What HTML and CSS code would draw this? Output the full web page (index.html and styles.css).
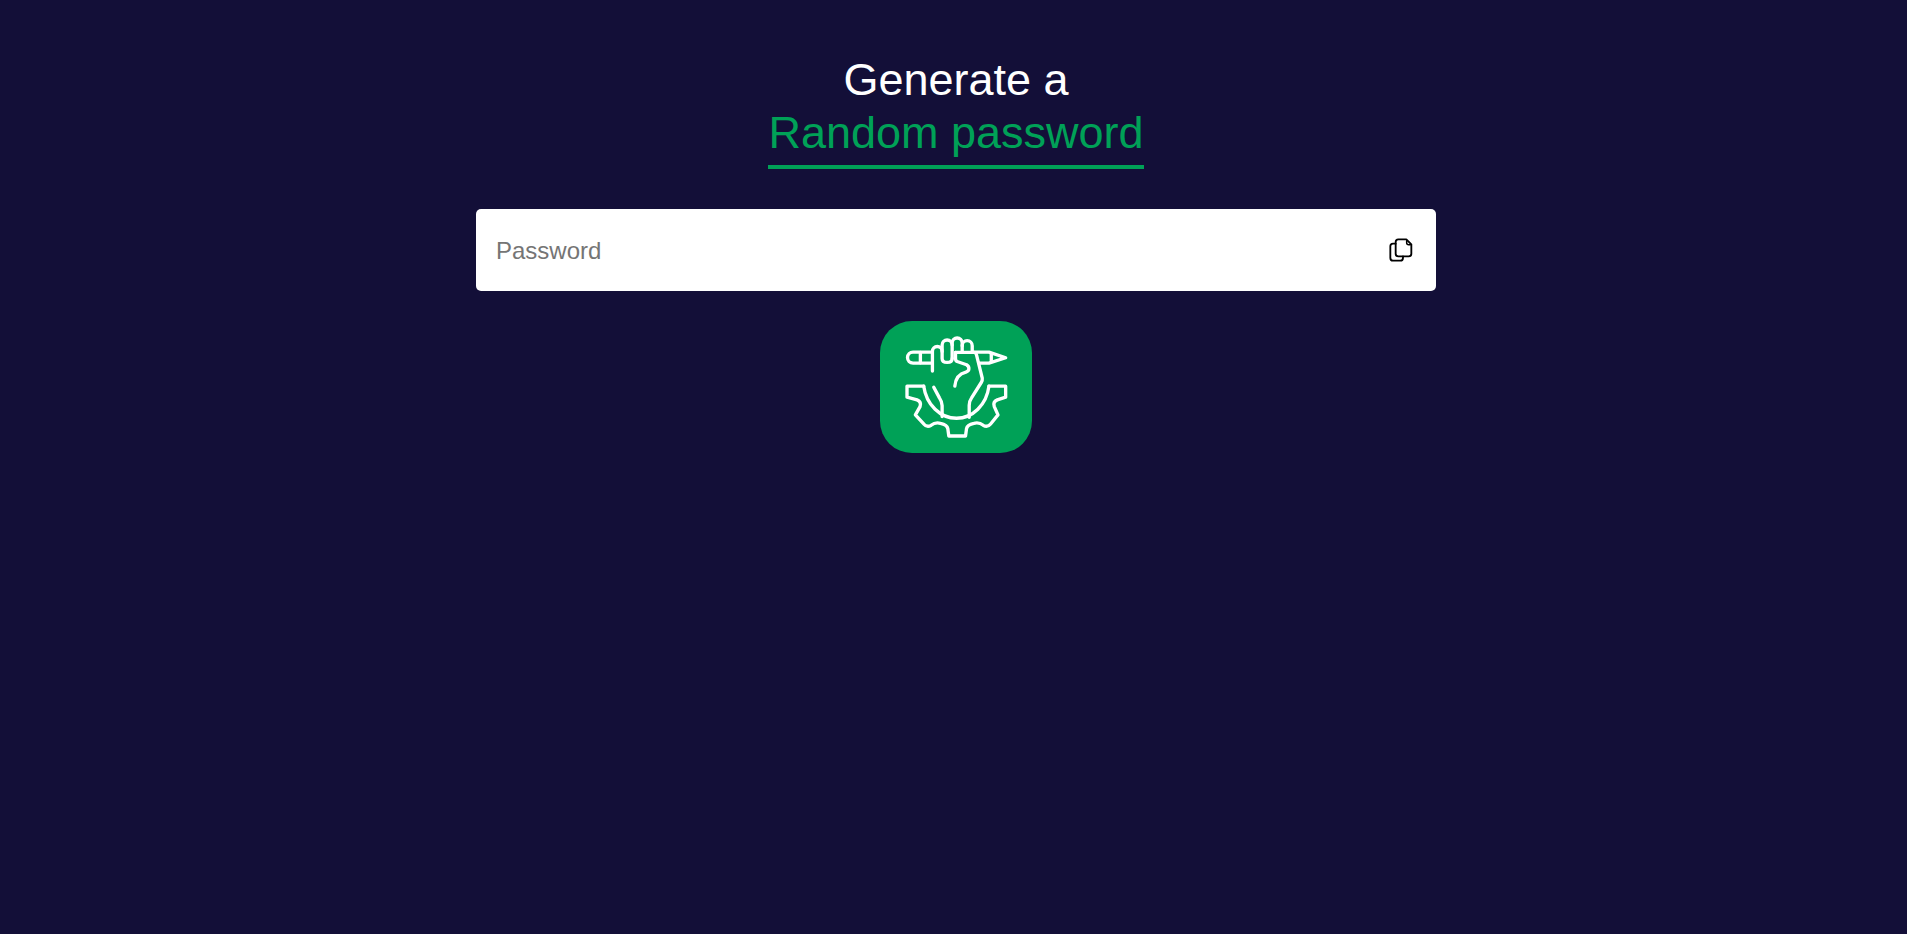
FILE: index.html
```html
<!DOCTYPE html>
<html lang="en">
<head>
<meta charset="utf-8">
<title>Random password generator</title>
<link rel="stylesheet" href="styles.css">
</head>
<body>
<main class="page">
  <h1 class="title">Generate a<br><span class="accent">Random password</span></h1>
  <div class="field">
    <input class="field-input" type="text" placeholder="Password" aria-label="Password">
    <button class="copy" type="button" aria-label="Copy">
      <svg class="copy-icon" viewBox="88 113 72 72" fill="none" stroke="#000" stroke-width="5.500" stroke-linecap="round" stroke-linejoin="round">
        <path d="M108 130H100Q92 130 92 138V172Q92 181 100 181H122Q130 181 130 172V168"/>
        <path d="M116 117H140L155 132V160Q155 168 147 168H116Q108 168 108 160V125Q108 117 116 117Z"/>
        <path d="M141 121V127Q141 133 147 133H152" stroke-width="4.5"/>
      </svg>
    </button>
  </div>
  <button class="generate" type="button" aria-label="Generate">
    <svg class="generate-icon" viewBox="134 79 308 305" fill="none" stroke="#fff" stroke-width="10" stroke-linecap="round" stroke-linejoin="round">
      <path d="M215 127H158A16.500 16.500 0 0 0 158 160H215"/>
      <path d="M180 128V159"/>
      <path d="M340 127H385L435 144L385 160H356"/>
      <path d="M392 132V155"/>
      <path d="M216 184V125A14.500 14.500 0 0 1 245 125V146Q245 158 260 158Q275 158 275 146"/>
      <path d="M245 125V106A15 15 0 0 1 275 106V146"/>
      <path d="M275 106V100A15 15 0 0 1 305 100V127"/>
      <path d="M305 108A15 15 0 0 1 335 108V127"/>
      <path d="M285 128H340Q346 128 348 136L365 205Q366 212 362 218L333 264Q326 274 326 286V322"/>
      <path d="M285 128V146Q285 154 292 156L318 165Q326 170 325 178Q325 184 316 187Q286 194 283 229"/>
      <path d="M220 232L237 264Q244 274 245 287V320"/>
      <path d="M190 229H140V262L170 270Q184 276 179 290L165 315L190 342Q200 354 212 346Q224 336 240 340Q260 344 262 356L265 378H315L318 356Q320 344 340 340Q356 336 368 346Q380 354 390 342L412 315L401 290Q396 276 410 270L435 262V229H385"/>
      <path d="M190 229C198 285 240 325 288 325C336 325 378 285 385 229"/>
    </svg>
  </button>
</main>
</body>
</html>
```

FILE: styles.css
```css
* {
  box-sizing: border-box;
}

html,
body {
  height: 100%;
}

body {
  margin: 0;
  background: #130f38;
  font-family: "Liberation Sans", Arial, sans-serif;
}

.page {
  display: flex;
  flex-direction: column;
  align-items: center;
  padding: 53px 0 0 5px;
}

.title {
  margin: 0 0 40px;
  font-size: 45px;
  font-weight: 400;
  line-height: 53px;
  color: #fff;
  text-align: center;
}

.accent {
  display: inline-block;
  padding-bottom: 6px;
  border-bottom: 4px solid #00a157;
  color: #00a157;
}

.field {
  display: flex;
  align-items: center;
  width: 960px;
  height: 82px;
  padding: 0 23px 0 20px;
  border-radius: 5px;
  background: #fff;
}

.field-input {
  flex: 1;
  min-width: 0;
  border: 0;
  outline: 0;
  padding: 2px 0 0;
  background: transparent;
  font: 24px "Liberation Sans", Arial, sans-serif;
}

.field-input::placeholder {
  color: #757575;
  opacity: 1;
}

.copy {
  display: flex;
  padding: 0;
  border: 0;
  background: none;
}

.copy-icon {
  width: 24px;
  height: 24px;
}

.generate {
  display: flex;
  align-items: center;
  justify-content: center;
  width: 152px;
  height: 132px;
  margin-top: 30px;
  padding: 0;
  border: 0;
  border-radius: 32px;
  background: #00a157;
}

.generate-icon {
  width: 103px;
  height: 102px;
}
```
